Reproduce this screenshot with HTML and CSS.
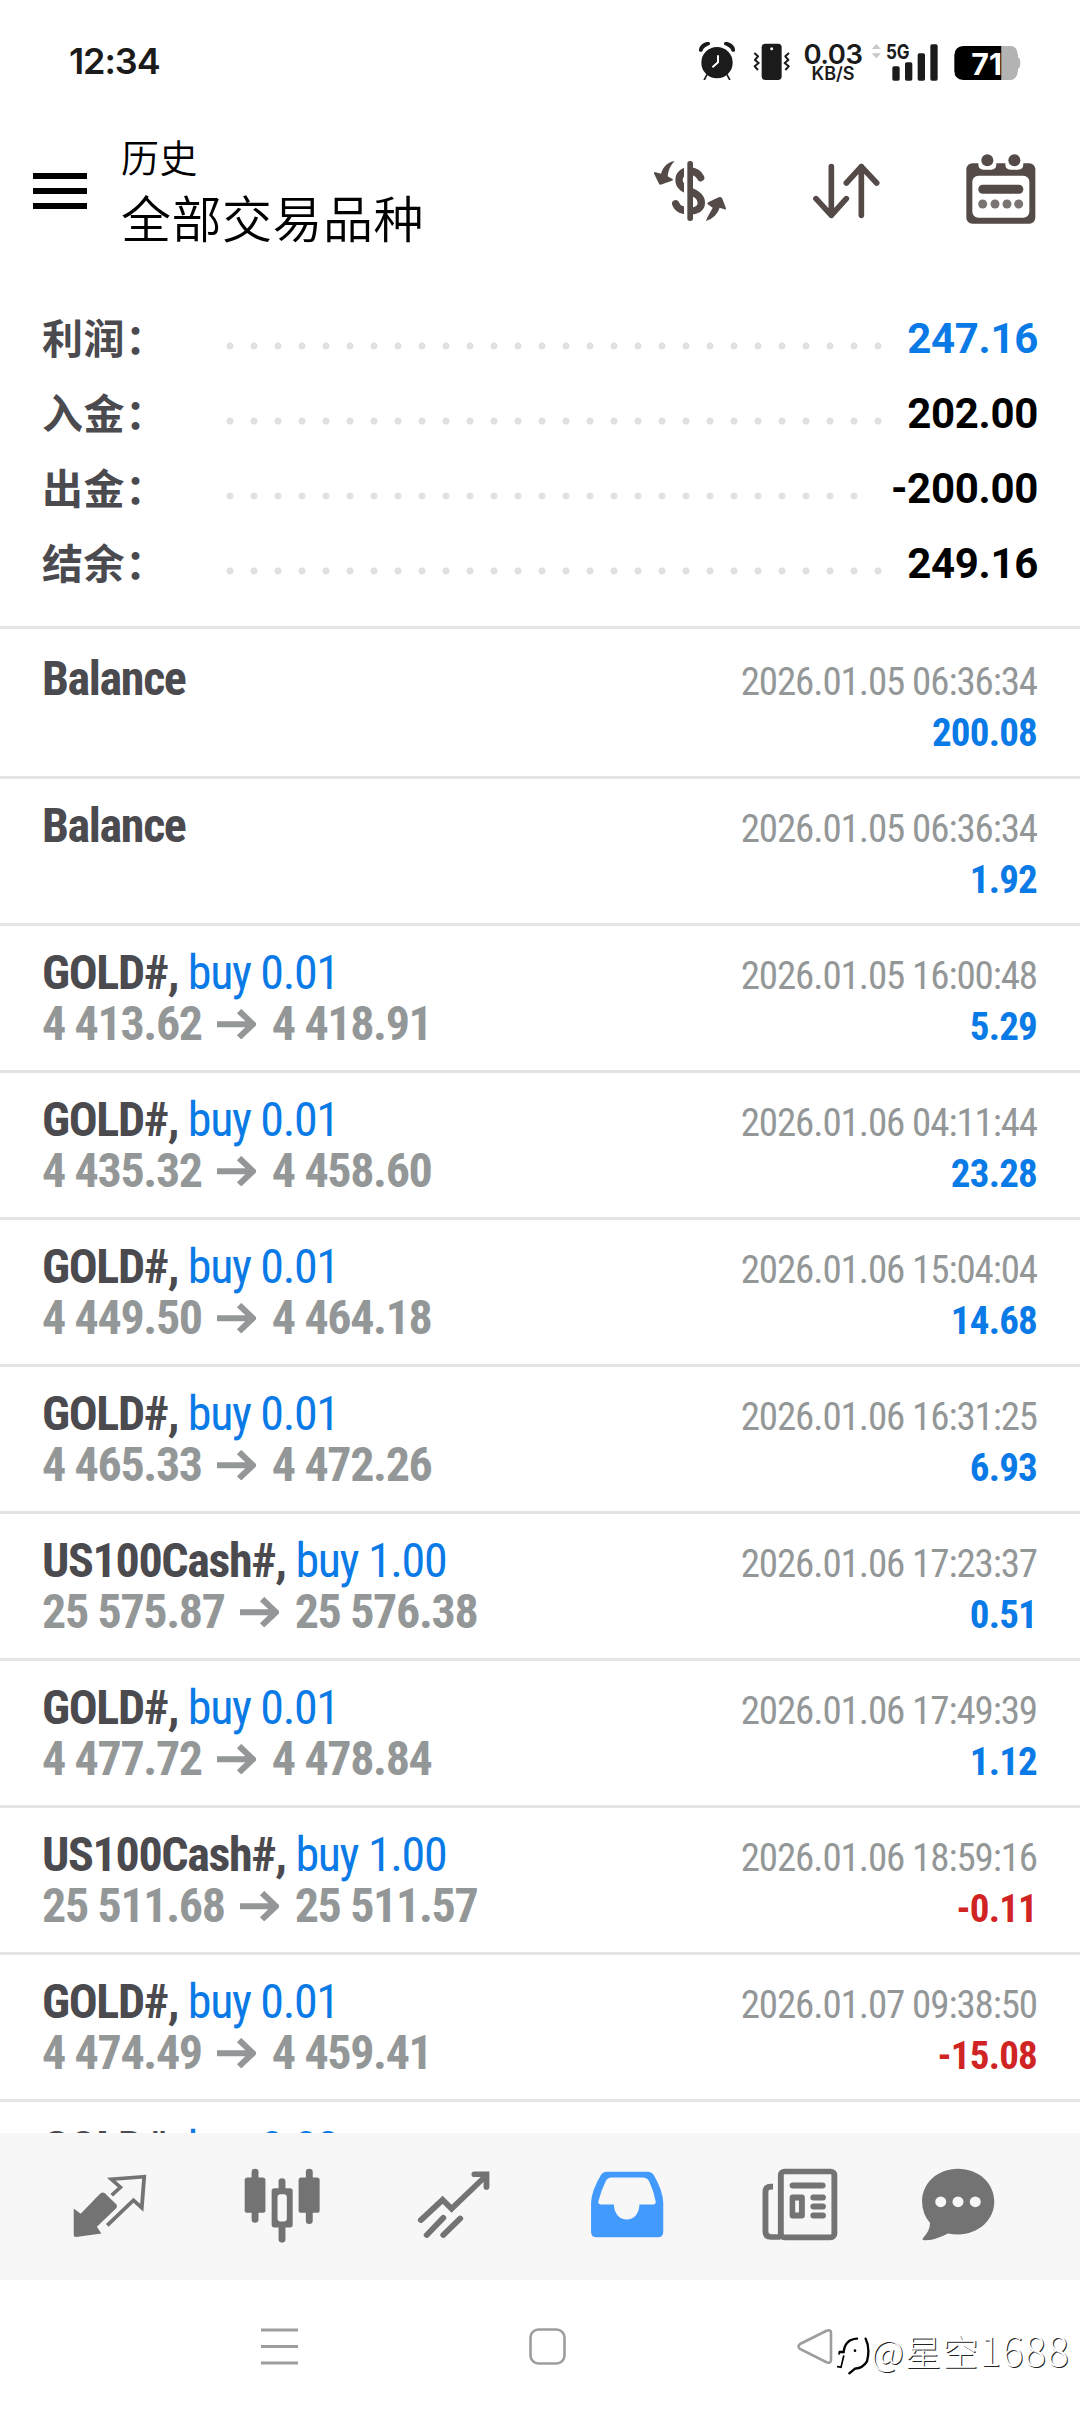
FILE: index.html
```html
<!DOCTYPE html>
<html lang="zh-CN">
<head>
<meta charset="utf-8">
<title>历史</title>
<link rel="stylesheet" href="styles.css">
</head>
<body>
<div class="screen">
  <div class="status">
    <span class="clock">12:34</span>
    <svg class="alarm" width="36" height="38" viewBox="58 38 108 114"><circle cx="112" cy="100" r="47" fill="#1b1b1b"/><path d="M60 62Q64 43 84 40Q90 40 88 45Q70 52 66 64Q61 67 60 62ZM164 62Q160 43 140 40Q134 40 136 45Q154 52 158 64Q163 67 164 62ZM82 136L74 151M142 136L150 151" fill="#1b1b1b" stroke="#1b1b1b" stroke-width="5" stroke-linecap="round"/><path d="M115 80V99L100 112" fill="none" stroke="#fff" stroke-width="6" stroke-linecap="round"/></svg>
    <svg class="vibrate" width="37" height="38" viewBox="220 40 111 114"><rect x="246" y="42" width="60" height="109" rx="11" fill="#1b1b1b"/><circle cx="276" cy="57" r="4.5" fill="#fff"/><path d="M224 70L235 80L226 91L237 100L225 110L235 121M328 70L317 80L326 91L315 100L327 110L317 121" fill="none" stroke="#1b1b1b" stroke-width="6" stroke-linejoin="round"/></svg>
    <span class="speed"><b>0.03</b><i>KB/S</i></span>
    <svg class="signal" width="68" height="40" viewBox="575 38 204 120"><path d="M591 41L605 56H577ZM577 69H605L591 84Z" fill="#c9c9c9"/><rect x="639" y="108" width="22" height="43" rx="5" fill="#1b1b1b"/><rect x="677" y="96" width="22" height="55" rx="5" fill="#1b1b1b"/><rect x="715" y="69" width="22" height="82" rx="5" fill="#1b1b1b"/><rect x="753" y="42" width="22" height="109" rx="5" fill="#1b1b1b"/><text class="net" x="620" y="86" textLength="71" lengthAdjust="spacingAndGlyphs">5G</text></svg>
    <svg class="battery" width="67" height="36" viewBox="824 45 201 108"><path d="M966 48H996Q1013 50 1016 75V122Q1012 148 996 150H966Z" fill="#b3b3b3"/><path d="M1016 81Q1023 86 1023 99Q1023 112 1016 117Z" fill="#b3b3b3"/><path d="M966 48H852Q825 50 825 76V122Q825 148 852 150H966Z" fill="#000"/><text class="charge" x="876" y="134" textLength="92" lengthAdjust="spacingAndGlyphs">71</text></svg>
  </div>

  <header class="appbar">
    <svg class="burger" width="54" height="36" viewBox="0 0 54 36"><path d="M0 3H54M0 18H54M0 33H54" stroke="#000" stroke-width="6"/></svg>
    <div class="titles"><div class="title">历史</div><div class="subtitle">全部交易品种</div></div>
    <svg class="dollar" width="74" height="62" viewBox="39 60 222 186"><path d="M182 113Q173 94 150 93C128 92 117 105 117 120C117 138 130 147 150 154C172 162 184 172 184 188C184 206 168 213 150 213C128 213 112 206 107 191" fill="none" stroke="#544a47" stroke-width="22" stroke-linecap="round"/><path d="M132 60H158V246H132Z" fill="#fff"/><rect x="142" y="63" width="17" height="180" rx="8" fill="#544a47"/><path d="M104 63C85 66 70 78 63 101L44 96Q40 97 43 103L57 131Q60 136 66 133L96 122Q102 118 96 116L83 109Q85 82 104 63ZM198 243C202 228 212 216 218 203L205 194Q199 190 206 186L236 172Q244 169 247 176L258 205Q259 210 253 208L239 203Q230 232 198 243Z" fill="#544a47"/></svg>
    <svg class="sort" width="67" height="56" viewBox="518 69 201 168"><path d="M573 80V226M527 176L573 226L618 176M663 226V80M618 129L663 80L709 129" fill="none" stroke="#544a47" stroke-width="17" stroke-linecap="round" stroke-linejoin="round"/></svg>
    <svg class="calendar" width="70" height="70" viewBox="1037 73 210 210"><rect x="1038" y="101" width="207" height="181" rx="18" fill="#544a47"/><path d="M1074 95V104Q1074 120 1090 120H1112Q1128 120 1128 104V95ZM1155 95V104Q1155 120 1171 120H1193Q1209 120 1209 104V95Z" fill="#fff"/><rect x="1056" y="138" width="171" height="126" rx="18" fill="#fff"/><g fill="#544a47"><circle cx="1101" cy="92" r="18"/><circle cx="1182" cy="92" r="18"/><rect x="1074" y="165" width="135" height="27" rx="13"/></g><g fill="#7a7573"><circle cx="1087" cy="223" r="13.5"/><circle cx="1124" cy="223" r="13.5"/><circle cx="1160" cy="223" r="13.5"/><circle cx="1195" cy="223" r="13.5"/></g></svg>
  </header>

  <section class="summary">
    <div class="total"><span class="label">利润：</span><span class="dots"></span><span class="amount up">247.16</span></div>
    <div class="total"><span class="label">入金：</span><span class="dots"></span><span class="amount">202.00</span></div>
    <div class="total"><span class="label">出金：</span><span class="dots"></span><span class="amount">-200.00</span></div>
    <div class="total"><span class="label">结余：</span><span class="dots"></span><span class="amount">249.16</span></div>
  </section>

  <svg class="defs"><symbol id="to" viewBox="627 264 113 90" preserveAspectRatio="none"><path d="M627 309.500H730M691 270L731 309.500L691 349" fill="none" stroke="#949798" stroke-width="18"/></symbol></svg>
  <main class="deals">
    <div class="deal first"><div><div class="name">Balance</div></div><div class="right"><div class="time">2026.01.05 06:36:34</div><div class="gain">200.08</div></div></div>
    <div class="deal"><div><div class="name">Balance</div></div><div class="right"><div class="time">2026.01.05 06:36:34</div><div class="gain">1.92</div></div></div>
    <div class="deal"><div><div class="name">GOLD#, <span class="side">buy 0.01</span></div><div class="price">4 413.62<svg><use href="#to"/></svg>4 418.91</div></div><div class="right"><div class="time">2026.01.05 16:00:48</div><div class="gain">5.29</div></div></div>
    <div class="deal"><div><div class="name">GOLD#, <span class="side">buy 0.01</span></div><div class="price">4 435.32<svg><use href="#to"/></svg>4 458.60</div></div><div class="right"><div class="time">2026.01.06 04:11:44</div><div class="gain">23.28</div></div></div>
    <div class="deal"><div><div class="name">GOLD#, <span class="side">buy 0.01</span></div><div class="price">4 449.50<svg><use href="#to"/></svg>4 464.18</div></div><div class="right"><div class="time">2026.01.06 15:04:04</div><div class="gain">14.68</div></div></div>
    <div class="deal"><div><div class="name">GOLD#, <span class="side">buy 0.01</span></div><div class="price">4 465.33<svg><use href="#to"/></svg>4 472.26</div></div><div class="right"><div class="time">2026.01.06 16:31:25</div><div class="gain">6.93</div></div></div>
    <div class="deal"><div><div class="name">US100Cash#, <span class="side">buy 1.00</span></div><div class="price">25 575.87<svg><use href="#to"/></svg>25 576.38</div></div><div class="right"><div class="time">2026.01.06 17:23:37</div><div class="gain">0.51</div></div></div>
    <div class="deal"><div><div class="name">GOLD#, <span class="side">buy 0.01</span></div><div class="price">4 477.72<svg><use href="#to"/></svg>4 478.84</div></div><div class="right"><div class="time">2026.01.06 17:49:39</div><div class="gain">1.12</div></div></div>
    <div class="deal"><div><div class="name">US100Cash#, <span class="side">buy 1.00</span></div><div class="price">25 511.68<svg><use href="#to"/></svg>25 511.57</div></div><div class="right"><div class="time">2026.01.06 18:59:16</div><div class="gain loss">-0.11</div></div></div>
    <div class="deal"><div><div class="name">GOLD#, <span class="side">buy 0.01</span></div><div class="price">4 474.49<svg><use href="#to"/></svg>4 459.41</div></div><div class="right"><div class="time">2026.01.07 09:38:50</div><div class="gain loss">-15.08</div></div></div>
    <div class="deal"><div><div class="name">GOLD#, <span class="side">buy 0.02</span></div></div></div>
  </main>

  <nav class="tabs">
    <svg viewBox="210 232 220 232" preserveAspectRatio="none"><path d="M215 357L235 373L292 312Q299 306 306 312L338 344Q343 350 338 356L282 412L295 432L222 443Q215 443 215 437Z" fill="#737373"/><path d="M325 317L350 293L324 269L419 261L412 355L388 332L312 408" fill="none" stroke="#737373" stroke-width="11"/></svg>
    <svg viewBox="707 232 220 232" preserveAspectRatio="none"><g fill="#737373"><rect x="729" y="237" width="20" height="163" rx="10"/><rect x="709" y="264" width="60" height="106" rx="8"/><rect x="886" y="237" width="20" height="167" rx="10"/><rect x="865" y="264" width="61" height="106" rx="8"/><rect x="807" y="266" width="20" height="194" rx="10"/><rect x="787" y="296" width="61" height="118" rx="8"/></g><rect x="804" y="314" width="27" height="82" rx="9" fill="#f7f7f7"/></svg>
    <svg viewBox="1207 232 220 232" preserveAspectRatio="none"><path d="M1221 392L1284 331L1310 358L1410 258M1376 254H1411V292M1238 437L1286 385M1286 437L1335 387" fill="none" stroke="#737373" stroke-width="17" stroke-linecap="round" stroke-linejoin="miter"/></svg>
    <svg viewBox="141 232 220 232" preserveAspectRatio="none"><path d="M193 246H312Q322 246 328 255Q355 303 356 340V427Q356 444 340 444H163Q147 444 147 427V340Q148 303 176 255Q182 246 193 246Z" fill="#429bfc"/><path d="M206 264H296Q309 264 315 275Q329 305 334 336Q335 345 327 345H287C286 373 272 390 250 390C229 390 214 373 213 345H176Q167 345 168 336Q175 306 189 276Q194 264 206 264Z" fill="#f7f7f7"/></svg>
    <svg viewBox="645 232 220 232" preserveAspectRatio="none"><g fill="none" stroke="#737373" stroke-width="17"><rect x="699.500" y="245.500" width="155" height="198.500" rx="11"/><path d="M677 291H671Q655 291 655 307V425Q655 443 671 443H699"/></g><g fill="#737373"><rect x="725" y="279" width="104" height="18" rx="9"/><rect x="725" y="315" width="44" height="72" rx="9"/><rect x="785" y="315" width="45" height="18" rx="9"/><rect x="785" y="342" width="45" height="18" rx="9"/><rect x="785" y="369" width="45" height="18" rx="9"/></g><rect x="741" y="333" width="11" height="36" fill="#f7f7f7"/></svg>
    <svg viewBox="1103 232 220 232" preserveAspectRatio="none"><path d="M1213 237C1272 237 1318 280 1318 336C1318 392 1272 435 1213 435Q1198 435 1184 432Q1148 452 1116 453Q1107 452 1112 446Q1132 424 1132 401Q1109 373 1109 336C1109 280 1154 237 1213 237Z" fill="#737373"/><g fill="#f7f7f7"><circle cx="1163" cy="337" r="16"/><circle cx="1213" cy="337" r="16"/><circle cx="1263" cy="337" r="16"/></g></svg>
  </nav>

  <footer class="sysnav">
    <svg width="37" height="37" viewBox="0 0 37 37"><path d="M0 2H37M0 18.500H37M0 35H37" stroke="#9d9d9d" stroke-width="3"/></svg>
    <svg width="37" height="37" viewBox="0 0 37 37"><rect x="1.500" y="1.500" width="34" height="34" rx="8" fill="none" stroke="#9d9d9d" stroke-width="2.600"/></svg>
    <svg width="37" height="37" viewBox="0 0 37 37"><path d="M3 16L29 3Q34 1 34 5V32Q34 36 29 34L3 21Q0 18.500 3 16Z" fill="none" stroke="#9d9d9d" stroke-width="2.600"/></svg>
  </footer>
  <div class="watermark">
    <svg width="34" height="40" viewBox="172 82 102 120" fill="none" stroke="#000" stroke-linecap="round"><path d="M180 130H192Q196 92 232 90" stroke-width="7"/><path d="M192 142L184 176L174 174M180 130L178 136" stroke-width="5"/><path d="M258 90Q272 118 262 158Q250 178 226 180L209 194" stroke-width="7"/><circle cx="226" cy="126" r="4" fill="#000" stroke="none"/></svg>
    <span>@星空<span class="digits">1688</span></span>
  </div>
</div>
</body>
</html>
```
FILE: styles.css
```css
* { box-sizing: border-box; }
body { margin: 0; background: #fff; font-family: Roboto, "Noto Sans CJK SC", sans-serif; }
svg { display: block; flex: none; }
.screen { position: relative; width: 1080px; height: 2412px; display: flex; flex-direction: column; overflow: hidden; background: #fff; }
.defs { position: absolute; width: 0; height: 0; }

.status { height: 120px; padding: 42px 0 0 69px; display: flex; align-items: flex-start; color: #1b1b1b; font-family: Inter, sans-serif; }
.clock { width: 630px; font-size: 36px; line-height: 39px; font-weight: 600; letter-spacing: -1.1px; }
.vibrate { margin-left: 18px; margin-top: 1px; }
.speed { width: 62px; margin-left: 12px; display: flex; flex-direction: column; align-items: center; }
.speed b { font-size: 27.5px; line-height: 24px; font-weight: 600; letter-spacing: -0.5px; }
.speed i { font-size: 18px; line-height: 15px; font-weight: 600; font-style: normal; }
.signal { margin-left: 7px; margin-top: 1px; }
.net { font: 700 62px Inter, sans-serif; fill: #1b1b1b; }
.battery { margin-left: 15px; margin-top: 3px; }
.charge { font: 700 91px Inter, sans-serif; fill: #fff; }

.appbar { height: 181px; display: flex; align-items: flex-start; padding-left: 33px; color: #000; }
.burger { margin-top: 53px; }
.titles { width: 532px; margin-left: 34px; padding-top: 8px; font-family: "Noto Sans CJK SC", sans-serif; font-weight: 350; }
.title { font-size: 38px; line-height: 56px; letter-spacing: 0.5px; }
.subtitle { font-size: 50px; line-height: 65px; letter-spacing: 0.5px; }
.dollar { margin-top: 40px; }
.sort { margin-left: 86px; margin-top: 43px; }
.calendar { margin-left: 86px; margin-top: 34px; }

.summary { height: 328px; padding: 0 42px 0 43px; border-bottom: 3px solid #e4e4e4; }
.total { height: 75px; display: flex; align-items: center; font-weight: 700; }
.label { width: 183px; height: 75px; text-indent: -1px; font-family: "Noto Sans CJK SC", sans-serif; font-size: 41px; line-height: 71px; letter-spacing: 0.6px; color: #4a4a4f; }
.dots { flex: 1; height: 8px; margin: 15px 21px 0 0; background: radial-gradient(circle at 4px 4px, #e0e0e0 3px, transparent 4px) 0 0 / 24px 8px repeat-x; }
.amount { font-size: 42px; letter-spacing: -0.3px; color: #000; }
.amount.up { color: #0a7ae6; }

.deals { height: 1504px; overflow: hidden; font-family: "Roboto Condensed", Roboto, sans-serif; }
.deal { height: 147px; padding: 21px 43px 0 42px; display: flex; justify-content: space-between; border-bottom: 3px solid #e4e4e4; line-height: 51px; white-space: nowrap; letter-spacing: -1.35px; }
.deal.first { height: 150px; padding-top: 24px; }
.name { height: 51px; font-size: 48px; font-weight: 700; color: #4a4a4f; }
.side { font-weight: 400; color: #0a7ae6; }
.price { display: flex; align-items: center; font-size: 48px; font-weight: 700; color: #949798; }
.price svg { width: 39px; height: 30px; margin: 0 16px 0 15px; }
.right { padding-top: 4px; text-align: right; font-size: 39px; letter-spacing: -1.1px; }
.time { color: #949798; }
.gain { font-weight: 700; letter-spacing: -0.8px; color: #0a7ae6; }
.gain.loss { color: #d02323; }

.tabs { height: 147px; padding: 34px 0 0 72px; background: #f7f7f7; display: grid; grid-template-columns: 171.500px 172px 173px 173.500px 157.500px 76px; }
.tabs svg { width: 76px; height: 77px; }

.sysnav { height: 132px; padding: 48px 0 0 261px; display: flex; gap: 231px; }
.watermark { position: absolute; left: 837px; top: 2336px; display: flex; font: 300 36px "Noto Sans CJK SC", sans-serif; line-height: 26px; letter-spacing: 1.2px; color: #fff; text-shadow: 1px 1px 0 #222; white-space: nowrap; }
.digits { font-size: 40px; }
```
